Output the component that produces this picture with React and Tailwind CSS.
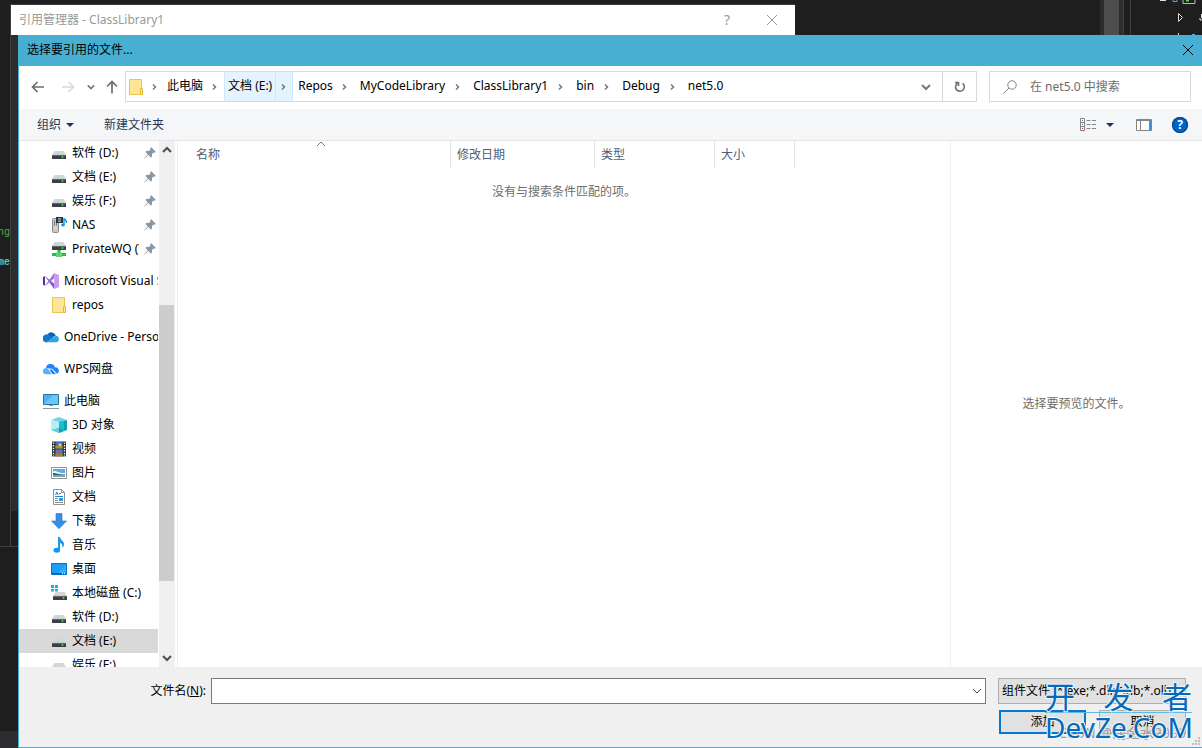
import { useState } from 'react'

const ICON_SIZE = { width: 16, height: 16, viewBox: '0 0 16 16' }

const Drive = () => (
    <>
        <path d="M3.5 5h9L15 9H1z" fill="#d3d6d8" />
        <rect x="1" y="9" width="14" height="4" rx=".6" fill="#3c3f41" />
        <path d="M1.5 9.4h13" stroke="#777" strokeWidth=".8" />
        <circle cx="11.5" cy="11" r=".9" fill="#3ff04a" />
    </>
)

const icons = {
    drive: <g transform="translate(0 1)"><Drive /></g>,
    system: (
        <>
            <g transform="translate(1 2)"><Drive /></g>
            <path d="M0 0h3v3H0zM4 0h3v3H4zM0 4h3v2.6H0zM4 4h3v2.6H4z" fill="#10b3ea" />
        </>
    ),
    network: (
        <>
            <g transform="translate(0 -4)"><Drive /></g>
            <path d="M6.5 9h3v3H15v3H1v-3h5.500z" fill="#35b44a" />
            <path d="M5 11.500h6V16H5z" fill="#57d66b" />
        </>
    ),
    nas: (
        <>
            <rect x="1.500" y="1.500" width="6" height="14" rx="1" fill="#c9c9c9" stroke="#8b8b8b" />
            <path d="M3.500 3.500v5M5.500 3.500v5" stroke="#777" />
            <path d="M3 11h3" stroke="#eee" />
            <rect x="5" y="0" width="7" height="6" fill="#333" />
            <path d="M7 1.200h3v1.200H7zM7 3.600h3v1.200H7z" fill="#8ec7e8" />
            <path d="M13 1v7M13 2c2 .5 2.500 2 2.500 4" stroke="#1c8ee0" strokeWidth="1.400" fill="none" />
            <ellipse cx="12" cy="8" rx="1.800" ry="1.400" fill="#1c8ee0" />
        </>
    ),
    visualStudio: (
        <>
            <path d="M11.200 0 16 2v12l-4.800 2z" fill="#c79bf2" />
            <path d="M0 4.200 2 3.200 11.200 16v-5.200L2.500 3.500z" fill="#8456c4" />
            <path d="M0 11.800V4.200l2-1v9.600z" fill="#53328f" />
            <path d="M2 12.800 11.200 0v5.200L3.500 12z" fill="#a174dc" />
        </>
    ),
    folder: (
        <>
            <path d="M1.500.5h12v15h-12z" fill="#ffe597" stroke="#eac54f" />
            <path d="M12.500 9.500h2v6h-2z" fill="#ffe597" stroke="#e3b93c" />
        </>
    ),
    oneDrive: (
        <>
            <path d="M4.500 5.500a4.600 4.600 0 0 1 8.300 1.200L8 9z" fill="#0c63b4" />
            <path d="M4 13.300A4 4 0 1 1 5 5.600l5 3.200z" fill="#1478cf" />
            <path d="M3 13.300 10 8.400l3-1.600a3.300 3.300 0 0 1 .2 6.500z" fill="#28a8ea" />
        </>
    ),
    wps: (
        <>
            <path d="M3 7a4.600 4.600 0 0 1 9-.6 3.400 3.400 0 0 1 2 6.400L9.500 8z" fill="#2583f5" />
            <path d="M0 10a3 3 0 0 1 5-2.300l4 5.600H3A3 3 0 0 1 0 10z" fill="#56b0ff" />
            <path d="m8 7.500 5.500 5.800h-4L6.500 9z" fill="#1667d8" stroke="#fff" strokeWidth=".7" />
        </>
    ),
    computer: (
        <>
            <path d="M.5 1.500h15v10H.5z" fill="#49b2f3" stroke="#28779f" />
            <path d="m1 11 9-9h5v9z" fill="#6dc5fa" />
            <path d="M6 12.500h4M0 15.500h16" stroke="#8a9ba5" />
        </>
    ),
    cube: (
        <>
            <path d="M8 0 16 3 8 5 0 3z" fill="#69d8e4" />
            <path d="M0 3 8 5v11l-8-3z" fill="#b7eef2" />
            <path d="m8 5 8-2v10l-8 3z" fill="#129dba" />
            <path d="m8 5 5-1v9.800L8 11z" fill="#1fb9cf" />
            <path d="m0 13 8-2.500V16z" fill="#62cedb" />
        </>
    ),
    video: (
        <>
            <path d="M1 .5h14v15H1z" fill="#333" />
            <path d="M4.500 1h7v6.500h-7z" fill="#3476d2" />
            <path d="M4.500 8.500h7V15h-7z" fill="#3d86de" />
            <path d="M4.500 5h7v2.500h-7z" fill="#b88c29" />
            <path d="M4.500 13h7v2h-7z" fill="#a9802c" />
            <circle cx="9" cy="3.800" r="1.500" fill="#f0cd3b" />
            <circle cx="7.500" cy="11" r="1.700" fill="#dc4937" />
            <path d="M2.500 1.500v14M13.500 1.500v14" stroke="#fff" strokeWidth="1.300" strokeDasharray="1.300 1.300" />
        </>
    ),
    pictures: (
        <>
            <path d="M.5 2.500h15v11H.5z" fill="#fff" stroke="#929292" />
            <path d="M2 4h12v8H2z" fill="#5fabe8" />
            <path d="M2 6.500c3-2 5 2 12 1.500v2H2z" fill="#e6f4fb" />
            <path d="M2 8c3 0 5 1.500 12 1.500v.800H2z" fill="#28655f" />
            <path d="M2 10.300h12V12H2z" fill="#7aa9b8" />
        </>
    ),
    documents: (
        <>
            <path d="M2.500.5h8l3 3v12h-11z" fill="#fff" stroke="#929292" />
            <path d="M10.500.5v3h3" fill="none" stroke="#929292" />
            <path d="m4.500 6 1.500-3 1 3M8 4.500h2M4 7.500h8" stroke="#188bd2" fill="none" />
            <path d="M4 9.500h3M4 11.500h3M4 13.500h8" stroke="#8a8a8a" />
            <path d="M8 9h4v3H8z" fill="#3499d7" />
        </>
    ),
    downloads: <path d="M5 .5h6V8h4.500L8 15.800.5 8H5z" fill="#3490e6" stroke="#2878c8" strokeWidth=".6" />,
    music: (
        <>
            <path d="M7 0h2c.2 3 4 4 4 7 0 1.500-.5 3-1.500 4 .2-3-.5-4.500-2.500-5v7H7z" fill="#1597f0" />
            <ellipse cx="5.800" cy="13.200" rx="3.300" ry="2.500" fill="#1597f0" />
        </>
    ),
    desktop: (
        <>
            <path d="M.5 2.500h15v11H.5z" fill="#1a9cf7" stroke="#0873b9" />
            <path d="m7 12 8-8v8z" fill="#33adff" />
            <path d="M1 12.500h14" stroke="#08629f" />
            <path d="M11 12.500h3" stroke="#fff" strokeDasharray="1 1" />
        </>
    ),
}

const groups = [
    [
        { label: '软件 (D:)', icon: 'drive', pinned: true },
        { label: '文档 (E:)', icon: 'drive', pinned: true },
        { label: '娱乐 (F:)', icon: 'drive', pinned: true },
        { label: 'NAS', icon: 'nas', pinned: true },
        { label: 'PrivateWQ (\\\\NAS)', icon: 'network', pinned: true },
    ],
    [
        { label: 'Microsoft Visual Studio', icon: 'visualStudio', root: true },
        { label: 'repos', icon: 'folder' },
    ],
    [{ label: 'OneDrive - Personal', icon: 'oneDrive', root: true }],
    [{ label: 'WPS网盘', icon: 'wps', root: true }],
    [
        { label: '此电脑', icon: 'computer', root: true },
        { label: '3D 对象', icon: 'cube' },
        { label: '视频', icon: 'video' },
        { label: '图片', icon: 'pictures' },
        { label: '文档', icon: 'documents' },
        { label: '下载', icon: 'downloads' },
        { label: '音乐', icon: 'music' },
        { label: '桌面', icon: 'desktop' },
        { label: '本地磁盘 (C:)', icon: 'system' },
        { label: '软件 (D:)', icon: 'drive' },
        { label: '文档 (E:)', icon: 'drive', selected: true },
        { label: '娱乐 (F:)', icon: 'drive' },
    ],
]

const crumbs = ['此电脑', '文档 (E:)', 'Repos', 'MyCodeLibrary', 'ClassLibrary1', 'bin', 'Debug', 'net5.0']

const Icon = ({ name }) => <svg {...ICON_SIZE} className="shrink-0">{icons[name]}</svg>

const Chevron = ({ className, size = 10, width = 1.5 }) => (
    <svg width={size} height={size} viewBox="0 0 10 10" fill="none" stroke="currentColor" strokeWidth={width} className={className}>
        <path d="m1 3 4 4 4-4" />
    </svg>
)

const CrumbArrow = () => (
    <svg width="6" height="8" viewBox="0 0 6 8" fill="none" stroke="#777" strokeWidth="1.500">
        <path d="m1 1.500 2.500 2.500L1 6.500" />
    </svg>
)

const Cross = () => (
    <svg width="12" height="12" viewBox="0 0 12 12" stroke="currentColor">
        <path d="m1 1 10 10M11 1 1 11" />
    </svg>
)

const Triangle = () => <svg width="8" height="4" viewBox="0 0 8 4"><path d="M0 0h8L4 4z" fill="#1b3760" /></svg>

const Pin = () => (
    <svg width="12" height="12" viewBox="0 0 12 12" className="mr-0.5 shrink-0" fill="#8797a5">
        <path d="m7 0 5 5-1.500.8-1-.3-1.700 1.800.3 2.200-1.300 1L4.300 8 .5 11.600 0 11.200l3.800-3.700L1.500 5l1-1.200 2.300.3 1.700-1.600-.3-1z" />
    </svg>
)

function NavItem({ item }) {
    return (
        <li>
            <a
                href="#"
                className={`flex h-6 items-center gap-[5px] whitespace-nowrap ${item.root ? 'pl-6' : 'pl-8'} ${item.selected ? 'bg-[#d9d9d9]' : ''}`}
            >
                <Icon name={item.icon} />
                <span className="flex-1 overflow-hidden">{item.label}</span>
                {item.pinned && <Pin />}
            </a>
        </li>
    )
}

function Sidebar() {
    return (
        <nav className="flex w-[159px] shrink-0 border-r border-[#ececec]">
            <div className="flex w-[139px] flex-col gap-2 overflow-hidden">
                {groups.map((items, i) => (
                    <ul key={i}>
                        {items.map((item) => <NavItem key={item.label} item={item} />)}
                    </ul>
                ))}
            </div>
            <div className="ml-px flex w-4 flex-col items-center bg-[#f0f0f0] text-[#505050]">
                <Chevron className="my-1 shrink-0 rotate-180" width={2} />
                <div className="grow-[146]"></div>
                <div className="w-[15px] grow-[276] self-start bg-[#cdcdcd]"></div>
                <div className="grow-[68]"></div>
                <Chevron className="my-1 shrink-0" width={2} />
            </div>
        </nav>
    )
}

function AddressBar() {
    return (
        <div className="flex h-[43px] items-center bg-white pr-[11px] pb-0.5 text-[#777]">
            <button aria-label="后退" className="ml-3">
                <svg width="14" height="14" viewBox="0 0 14 14" fill="none" stroke="#6d6d6d" strokeWidth="1.700"><path d="M13 7H1.500M6.500 2l-5 5 5 5" /></svg>
            </button>
            <button aria-label="前进" className="ml-4">
                <svg width="14" height="14" viewBox="0 0 14 14" fill="none" stroke="#d8d8d8" strokeWidth="1.500"><path d="M1 7h11.500M7.500 2l5 5-5 5" /></svg>
            </button>
            <button aria-label="最近" className="ml-3"><Chevron size={8} width={2} /></button>
            <button aria-label="向上" className="ml-[11px]">
                <svg width="12" height="14" viewBox="0 0 12 14" fill="none" stroke="#6d6d6d" strokeWidth="1.700"><path d="M6 13.500V1.500M1 6.500l5-5 5 5" /></svg>
            </button>
            <div className="ml-[7px] flex h-[31px] flex-1 items-center border border-[#d9d9d9] text-black">
                <span className="pr-2 pl-0.5"><Icon name="folder" /></span>
                <CrumbArrow />
                <ol className="flex h-full items-center pl-1">
                    {crumbs.map((crumb, i) => (
                        <li key={crumb} className={`flex h-full items-center border-x ${i === 1 ? 'border-[#cce8ff] bg-[#e5f3ff]' : 'border-transparent'}`}>
                            <a href="#" className={`flex h-full items-center pb-0.5 ${i === 1 ? 'border-r border-[#cce8ff] px-[3px]' : i > 2 ? 'px-[5px]' : 'px-1'}`}>{crumb}</a>
                            {i < crumbs.length - 1 && <span className="px-[5px]"><CrumbArrow /></span>}
                        </li>
                    ))}
                </ol>
                <button aria-label="以前的位置" className="ml-auto px-[11px] text-[#777]"><Chevron width={2} /></button>
                <button aria-label="刷新" className="flex h-full w-[34px] items-center justify-center border-l border-[#d9d9d9]">
                    <svg width="12" height="12" viewBox="0 0 12 12" fill="none" stroke="#707070" strokeWidth="1.600">
                        <path d="M8.500 2.300A4.400 4.400 0 1 1 3.300 2.400M1 1.500h3.500V5" />
                    </svg>
                </button>
            </div>
            <label className="ml-3 flex h-[31px] w-[202px] items-center border border-[#d9d9d9] pl-[13px]">
                <svg width="14" height="14" viewBox="0 0 14 14" fill="none" stroke="#858585" className="shrink-0"><circle cx="9" cy="5" r="4.200" /><path d="M6 8 .5 13.500" /></svg>
                <input aria-label="搜索" placeholder="在 net5.0 中搜索" className="ml-[13px] w-full min-w-0 outline-none placeholder:text-[#6d6d6d]" />
            </label>
        </div>
    )
}

function Toolbar() {
    return (
        <div className="flex h-8 items-center border-b border-[#e5e5e5] bg-[#f5f6f7] px-[14px] text-[#1e395b]">
            <button className="flex items-center gap-[5px] pl-1">组织 <Triangle /></button>
            <button className="ml-[30px]">新建文件夹</button>
            <button aria-label="更改视图" className="ml-auto flex items-center gap-[9px]">
                <svg width="17" height="14" viewBox="0 0 17 14" fill="none" stroke="#858585">
                    <path d="M.5.5h4v12h-4zM.5 4.500h4M.5 8.500h4M6.500 2.500h4m1.500 0h4M6.500 6.500h4m1.500 0h4M6.500 10.500h4m1.500 0h4" />
                    <path d="M2 2.500h1" stroke="#38a862" /><path d="M2 6.500h1" stroke="#3975c3" /><path d="M2 10.500h1" stroke="#d03939" />
                </svg>
                <Triangle />
            </button>
            <button aria-label="预览窗格" className="ml-[22px]">
                <svg width="16" height="12" viewBox="0 0 16 12">
                    <path d="M.5.5h15v11H.5z" fill="#fff" stroke="#858585" />
                    <path d="M1 1.500h14M4.500 2v9" stroke="#858585" /><path d="M13 2h2.500v9.500H13z" fill="#3793e1" />
                </svg>
            </button>
            <button aria-label="帮助" className="ml-5 flex size-4 items-center justify-center rounded-full bg-[#0063c8] text-xs font-bold text-white ring-1 ring-[#083f7b] ring-inset">?</button>
        </div>
    )
}

function FileTable() {
    return (
        <div className="min-w-0 flex-1">
            <table className="w-full table-fixed border-separate border-spacing-0 text-left text-[#4c607a]">
                <thead>
                    <tr className="h-[27px]">
                        <th className="w-[273px] border-r border-[#e5e5e5] pl-[18px] font-normal">
                            <div className="relative">
                                名称
                                <Chevron className="absolute -top-2 left-[120px] rotate-180 text-[#777]" width={1} />
                            </div>
                        </th>
                        <th className="w-[144px] border-r border-[#e5e5e5] pl-1.5 font-normal">修改日期</th>
                        <th className="w-[120px] border-r border-[#e5e5e5] pl-1.5 font-normal">类型</th>
                        <th className="w-20 border-r border-[#e5e5e5] pl-1.5 font-normal">大小</th>
                        <th></th>
                    </tr>
                </thead>
                <tbody>
                    <tr>
                        <td colSpan={5} className="pt-4 text-center text-[#6d6d6d]">没有与搜索条件匹配的项。</td>
                    </tr>
                </tbody>
            </table>
        </div>
    )
}

function Footer() {
    const [fileName, setFileName] = useState('')

    return (
        <div className="relative h-20 shrink-0 bg-[#f0f0f0] pt-[11px] pr-4">
            <div className="flex items-center">
                <label htmlFor="file-name" className="w-48 pr-[5px] text-right">文件名(<u>N</u>):</label>
                <div className="flex h-[26px] flex-1 items-center border border-[#7a7a7a] bg-white">
                    <input id="file-name" value={fileName} onChange={(e) => setFileName(e.target.value)} className="h-full flex-1 px-1 outline-none" />
                    <button aria-label="展开" className="px-[3px] text-[#444]"><Chevron width={1} /></button>
                </div>
                <select aria-label="文件类型" className="ml-3 h-[26px] w-[188px] appearance-none border border-[#adadad] bg-[#e1e1e1] pl-[3px]">
                    <option>组件文件 (*.exe;*.dll;*.tlb;*.olb;</option>
                </select>
            </div>
            <div className="mt-1.5 flex justify-end gap-[13px]">
                <button className="h-6 w-[87px] border-2 border-[#0078d7] bg-[#e1e1e1]">添加</button>
                <button className="h-6 w-[87px] border border-[#adadad] bg-[#e1e1e1]">取消</button>
            </div>

            {/* size grip */}
            <svg width="8" height="8" viewBox="0 0 8 8" fill="#bfbfbf" className="absolute right-0.5 bottom-0.5">
                <path d="M6 0h2v2H6zM3 3h2v2H3zM6 3h2v2H6zM0 6h2v2H0zM3 6h2v2H3zM6 6h2v2H6z" />
            </svg>

            {/* Watermark */}
            <div className="pointer-events-none absolute right-4 bottom-1 text-sm whitespace-nowrap text-[#9d9d9d]">CSDN @胡金水2000</div>
            <div className="pointer-events-none absolute right-2.5 bottom-1.5 flex w-[147px] flex-col text-[#0868b9] [paint-order:stroke_fill] [-webkit-text-stroke:2px_#eef7fc]">
                <div className="flex justify-between border-b border-[#62b8dc] text-[30px] leading-[30px]"><span>开</span><span>发</span><span>者</span></div>
                <div className="text-center text-[28px] leading-[28px]">DevZe.CoM</div>
            </div>
        </div>
    )
}

function FileDialog() {
    return (
        <section className="flex min-w-0 flex-1 flex-col border-b border-l border-[#48afd3] bg-white">
            <header className="flex h-[31px] shrink-0 items-center justify-between bg-[#48afd3] pr-2 pb-px pl-2">
                <h1>选择要引用的文件...</h1>
                <button aria-label="关闭"><Cross /></button>
            </header>
            <AddressBar />
            <Toolbar />
            <main className="flex min-h-0 flex-1">
                <Sidebar />
                <FileTable />
                <aside className="flex w-[252px] shrink-0 items-center justify-center border-l border-[#f0f0f0] text-[#6d6d6d]">选择要预览的文件。</aside>
            </main>
            <Footer />
        </section>
    )
}

// Slice of the editor that stays visible behind both windows
function EditorTop() {
    return (
        <div className="flex h-[35px] shrink-0 pl-2.5">
            <div className="flex w-[785px] items-center self-end border-t border-l border-[#3f3f46] bg-white pl-2 text-[#999]">
                <h2 className="leading-[30px]">引用管理器 - ClassLibrary1</h2>
                <button aria-label="帮助" className="ml-auto text-sm">?</button>
                <button aria-label="关闭" className="mr-[17px] ml-9"><Cross /></button>
            </div>
            <div className="ml-auto flex w-[102px] bg-[#1e1e1e]">
                <div className="w-6 border-r border-[#3f3f46] bg-[#2d2d2d] pr-1 pl-1"><div className="h-full bg-[#4d4d4d]"></div></div>
                <div className="ml-1.5 border-l border-[#3f3f46]"></div>
                <svg width="70" height="35" viewBox="0 0 70 35" fill="none" className="ml-auto">
                    <path d="M28 .5h6" stroke="#ddd" /><path d="M41 0v1.500h4V0" stroke="#55a6f5" />
                    <path d="M51 0v3.500h12V0" stroke="#bbb" /><path d="M54 .5h3" stroke="#5fd45f" strokeWidth="2" />
                    <path d="M46.500 13.500v8l4-4z" stroke="#ddd" /><path d="M46.500 33v2" stroke="#ddd" /><path d="M60 34.500h3" stroke="#55a6f5" />
                    <path d="M68 20h2M68 18v2M69.500 14v4" stroke="#ddd" />
                </svg>
            </div>
        </div>
    )
}

function EditorEdge() {
    return (
        <div className="flex w-[18px] shrink-0 flex-col">
            <div className="flex h-[512px] border-b border-[#3f3f46]">
                <div className="flex w-[11px] flex-col items-end gap-3.5 overflow-hidden border-r border-[#3f3f46] pt-[190px] font-['Liberation_Mono'] text-[10px] leading-4">
                    <p className="text-[#57a64a]">ing</p>
                    <p className="font-bold text-[#4ec9b0]">me</p>
                </div>
                <div className="h-[476px] flex-1 bg-[#2d2d30]"></div>
            </div>
            <div className="mt-auto h-[17px] bg-[#2d2d30]"></div>
        </div>
    )
}

export default function App() {
    return (
        <div className="flex h-screen flex-col overflow-hidden bg-[#1e1e1e] font-['Noto_Sans','Noto_Sans_CJK_SC',sans-serif] text-xs text-black">
            <EditorTop />
            <div className="flex min-h-0 flex-1">
                <EditorEdge />
                <FileDialog />
            </div>
        </div>
    )
}
